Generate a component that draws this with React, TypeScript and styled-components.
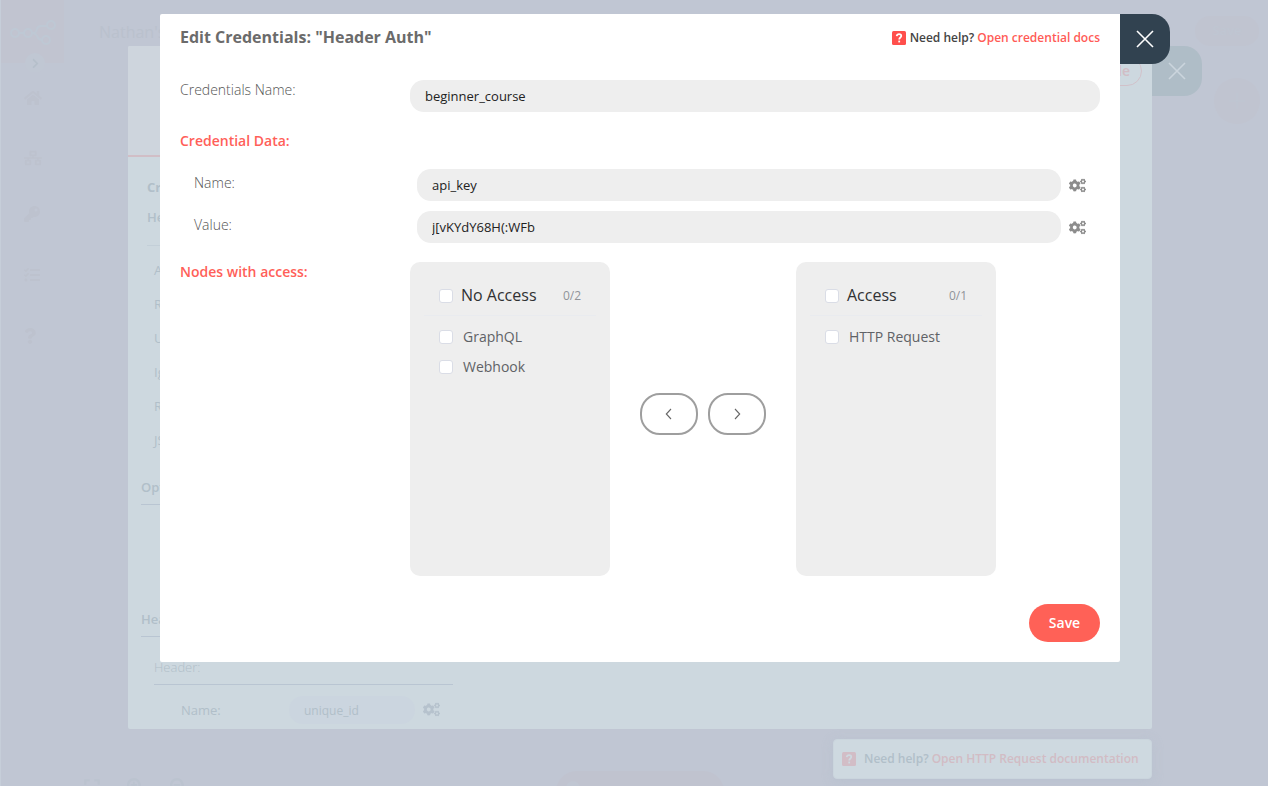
import React from "react";
import styled, { createGlobalStyle } from "styled-components";
import {
  FaCogs,
  FaExpand,
  FaHome,
  FaKey,
  FaChevronRight,
  FaNetworkWired,
  FaQuestion,
  FaSearchMinus,
  FaSearchPlus,
  FaTasks,
} from "react-icons/fa";

const GlobalStyle = createGlobalStyle`
  * { box-sizing: border-box; }
  body { margin: 0; font-family: "Open Sans", "Noto Sans", sans-serif; }
  button { font-family: inherit; padding: 0; margin: 0; cursor: pointer; }
  svg { display: block; flex: none; }
`;

const Screen = styled.div`
  position: relative;
  width: 1268px;
  height: 786px;
  overflow: hidden;
  display: flex;
  background: #c0c6d3;
  border-left: 1px solid #c6ced9;
`;

/* Workflow editor in the background */

const SideBar = styled.nav`
  width: 63px;
  flex: none;
  display: flex;
  flex-direction: column;
  color: #bdc2ce;
`;

const LogoBlock = styled.div`
  height: 63px;
  padding: 20px 0 0 9px;
  background: #c1c4d0;
`;

const Expander = styled.div`
  width: 20px;
  height: 20px;
  margin: -10px 0 0 24px;
  border-radius: 50%;
  background: #c0c7d3;
  color: #b5bfca;
  display: flex;
  align-items: center;
  justify-content: center;
`;

const SideItem = styled.div<{ $gap: number; $left?: number }>`
  margin: ${(p) => p.$gap}px 0 0 ${(p) => p.$left ?? 23}px;
  height: 18px;
  display: flex;
  align-items: center;
`;

const Canvas = styled.main`
  flex: 1;
  display: flex;
  flex-direction: column;
`;

const TopBar = styled.header`
  height: 46px;
  padding: 16px 9px 0 35px;
  display: flex;
  justify-content: space-between;
  align-items: flex-start;
`;

const WorkflowName = styled.div`
  font-size: 16px;
  line-height: 32px;
  color: #bac1cd;
`;

const FaintSave = styled.div`
  width: 64px;
  height: 30px;
  border-radius: 15px;
  background: #c0c4d0;
  color: #bfc6d2;
  font-size: 13px;
  font-weight: 600;
  line-height: 29px;
  text-align: center;
`;

const AddNode = styled.div`
  align-self: flex-end;
  width: 46px;
  height: 46px;
  margin: 32px 8px 0 0;
  border-radius: 50%;
  background: #c0c4d0;
  display: flex;
  align-items: center;
  justify-content: center;
`;

const CanvasFooter = styled.footer`
  margin-top: auto;
  height: 15px;
  padding-left: 19px;
  display: flex;
  overflow: hidden;
  color: #bbc3cf;
`;

const ZoomTools = styled.div`
  display: flex;
  gap: 26px;
  padding-top: 7px;
  width: 473px;
`;

const RunButton = styled.div`
  width: 168px;
  height: 42px;
  padding: 10px 20px;
  border-radius: 21px;
  background: #c0c3cf;
`;

const RunDot = styled.div`
  width: 14px;
  height: 14px;
  margin-left: -10px;
  border-radius: 50%;
  background: #c0c6d2;
`;

/* Node settings window behind the dialog */

const NodeWindow = styled.section`
  position: absolute;
  left: 127px;
  top: 46px;
  display: flex;
  align-items: flex-start;
`;

const NodePanel = styled.div`
  width: 1024px;
  height: 683px;
  border-radius: 2px 0 2px 2px;
  background: #cdd8df;
  display: flex;
  overflow: hidden;
`;

const Parameters = styled.div`
  width: 350px;
  display: flex;
  flex-direction: column;
`;

const ParameterHead = styled.div`
  height: 111px;
  flex: none;
  background: #ced5dd;
  border-bottom: 2px solid #d1bec6;
`;

const ParameterBody = styled.div`
  padding: 13px 25px 0 13px;
  display: flex;
  flex-direction: column;
  font-size: 13px;
  color: #b1bfc9;
`;

const ParamLine = styled.div<{
  $indent?: number;
  $gap?: number;
  $height: number;
  $weight?: number;
  $rule?: string;
}>`
  height: ${(p) => p.$height}px;
  flex: none;
  margin: ${(p) => p.$gap ?? 0}px 0 0 ${(p) => p.$indent ?? 0}px;
  line-height: 34px;
  font-weight: ${(p) => p.$weight ?? 400};
  border-bottom: ${(p) => (p.$rule ? `1px solid ${p.$rule}` : "none")};
`;

const FaintRow = styled.div`
  display: flex;
  align-items: center;
  margin: 11px 0 0 40px;
  height: 28px;
`;

const FaintLabel = styled.div`
  width: 108px;
`;

const FaintInput = styled.div`
  width: 126px;
  height: 28px;
  margin-right: 8px;
  padding-left: 15px;
  line-height: 29px;
  border-radius: 14px;
  background: #cbd5df;
  font-size: 12px;
`;

const FaintGears = styled.div`
  height: 26px;
  align-self: flex-start;
  display: flex;
  align-items: center;
  color: #b6c2cd;
`;

const Output = styled.div`
  flex: 1;
  display: flex;
  justify-content: flex-end;
  padding: 10px 10px 0 0;
`;

const ExecuteNode = styled.div`
  width: 130px;
  height: 30px;
  padding-right: 11px;
  border: 1px solid #d1c1c9;
  border-radius: 15px;
  color: #d1bdc5;
  font-size: 14px;
  font-weight: 600;
  line-height: 28px;
  text-align: right;
`;

const CloseTab = styled.button<{ $faint?: boolean }>`
  width: 50px;
  height: 50px;
  border: 0;
  border-radius: 0 18px 18px 0;
  background: ${(p) => (p.$faint ? "#afbdc7" : "#314250")};
  color: ${(p) => (p.$faint ? "#cbd5dd" : "#ffffff")};
  display: flex;
  align-items: center;
  justify-content: center;
`;

const HelpToast = styled.aside`
  position: absolute;
  left: 832px;
  top: 739px;
  width: 319px;
  height: 40px;
  padding-left: 8px;
  display: flex;
  align-items: center;
  border: 1px solid #cad5dd;
  border-radius: 4px;
  background: #ced9e0;
  box-shadow: 0 2px 12px rgba(170, 184, 200, 0.3);
  color: #b1bfc9;
  font-size: 12px;
  font-weight: 600;
  white-space: nowrap;
`;

const ToastText = styled.span`
  margin: -1px 3px 0 8px;
`;

const ToastLink = styled.span`
  margin-top: -1px;
  color: #d2bcc4;
`;

/* Credentials dialog */

const DialogLayer = styled.div`
  position: absolute;
  left: 159px;
  top: 14px;
  display: flex;
  align-items: flex-start;
`;

const Dialog = styled.section`
  width: 960px;
  height: 648px;
  padding: 0 20px 20px;
  border-radius: 2px 0 2px 2px;
  background: #fff;
  display: flex;
  flex-direction: column;
`;

const DialogHeader = styled.header`
  height: 66px;
  display: flex;
  justify-content: space-between;
  align-items: flex-start;
`;

const Title = styled.h1`
  margin: 0;
  font-size: 16px;
  line-height: 46px;
  font-weight: 700;
  color: #6b6b6b;
`;

const Help = styled.div`
  height: 48px;
  display: flex;
  align-items: center;
  font-size: 12px;
  font-weight: 600;
  color: #444;
`;

const HelpText = styled.span`
  margin: -2px 3px 0 4px;
`;

const HelpLink = styled.a`
  margin-top: -2px;
  color: #ff5b56;
`;

const Field = styled.div<{ $nested?: boolean }>`
  display: flex;
  height: 32px;
  margin: ${(p) => (p.$nested ? "0 14px 10px 14px" : "0")};
`;

const Label = styled.label<{ $width: number }>`
  width: ${(p) => p.$width}px;
  flex: none;
  line-height: ${(p) => (p.$width === 230 ? 20 : 28)}px;
  font-size: 14px;
  font-weight: 300;
  color: #555;
`;

const Input = styled.input`
  flex: 1;
  min-width: 0;
  height: 32px;
  padding: 0 15px 1px;
  border: 0;
  outline: 0;
  border-radius: 14px;
  background: #eee;
  font: 400 13px "Open Sans", sans-serif;
  color: #222;
`;

const Gears = styled.div`
  width: 25px;
  padding-left: 8px;
  display: flex;
  align-items: center;
  color: #8c8c8c;
`;

const SectionTitle = styled.h2<{ $gapTop?: number }>`
  width: 230px;
  margin: ${(p) => p.$gapTop ?? 0}px 0 0;
  font-size: 14px;
  line-height: 20px;
  font-weight: 600;
  color: #ff5f59;
`;

const FieldGroup = styled.div`
  margin-top: 18px;
`;

const Transfer = styled.div`
  display: flex;
  margin-top: 9px;
`;

const TransferPanel = styled.div`
  width: 200px;
  height: 314px;
  padding: 13px 14px 0;
  border-radius: 10px;
  background: #eee;
`;

const PanelHead = styled.div`
  height: 41px;
  padding: 0 15px;
  border-bottom: 1px solid #e9ebef;
  display: flex;
  align-items: center;
  font-size: 16px;
  color: #303133;
`;

const Count = styled.span`
  margin-left: auto;
  font-size: 12px;
  color: #909399;
`;

const PanelList = styled.ul`
  list-style: none;
  margin: 0;
  padding: 6px 15px 0;
`;

const PanelItem = styled.li`
  height: 30px;
  display: flex;
  align-items: center;
  font-size: 14px;
  color: #606266;
`;

const ItemText = styled.span`
  margin-top: -2px;
`;

const CheckBox = styled.span<{ $gap: number; $shift?: number }>`
  width: 14px;
  height: 14px;
  flex: none;
  margin: ${(p) => p.$shift ?? 0}px ${(p) => p.$gap}px 0 0;
  border: 1px solid #dadde6;
  border-radius: 3px;
  background: #fff;
`;

const TransferButtons = styled.div`
  width: 186px;
  padding: 131px 30px 0;
  display: flex;
  gap: 10px;
`;

const MoveButton = styled.button`
  width: 58px;
  height: 42px;
  border: 2px solid #9e9e9e;
  border-radius: 20px;
  background: #fff;
  display: flex;
  align-items: center;
  justify-content: center;
  color: #666;
`;

const DialogFooter = styled.footer`
  margin-top: auto;
  display: flex;
  justify-content: flex-end;
`;

const SaveButton = styled.button`
  width: 71px;
  height: 38px;
  padding-bottom: 2px;
  border: 0;
  border-radius: 19px;
  background: #ff6157;
  color: #fff;
  font-size: 14px;
  font-weight: 600;
`;

const Cross = () => (
  <svg width="18" height="18" viewBox="0 0 18 18" stroke="currentColor" strokeWidth="1.6" fill="none">
    <path d="M1 1L17 17M17 1L1 17" />
  </svg>
);

const Chevron = ({ left }: { left?: boolean }) => (
  <svg width="8" height="12" viewBox="0 0 8 12" stroke="currentColor" strokeWidth="1.1" fill="none">
    <path d={left ? "M6 1L1.3 6L6 11" : "M2 1L6.7 6L2 11"} />
  </svg>
);

const HelpMark = ({ bg, fg }: { bg: string; fg: string }) => (
  <svg width="14" height="14" viewBox="0 0 14 14" fill="none">
    <rect width="14" height="14" rx="1.5" fill={bg} />
    <path d="M4.7 5.2C4.9 3.7 5.8 3.2 7.1 3.2C8.4 3.2 9.3 3.9 9.3 5C9.3 6.6 7.2 6.4 7.2 8.6" stroke={fg} strokeWidth="1.7" />
    <rect x="6.3" y="9.6" width="1.8" height="1.8" fill={fg} />
  </svg>
);

const Logo = () => (
  <svg width="46" height="26" viewBox="0 0 46 26" fill="none" stroke="#bec8d4" strokeWidth="2">
    <circle cx="5" cy="13" r="4" />
    <circle cx="18" cy="13" r="4" />
    <circle cx="41" cy="5" r="4" />
    <circle cx="36" cy="20" r="4" />
    <path d="M9 13H14M22 13C30 13 24 6 31 6H37M22 13C29 13 26 20 32 20" />
  </svg>
);

const Panel = ({ title, count, items }: { title: string; count: string; items: string[] }) => (
  <TransferPanel>
    <PanelHead>
      <CheckBox $gap={8} $shift={1} />
      {title}
      <Count>{count}</Count>
    </PanelHead>
    <PanelList>
      {items.map((item) => (
        <PanelItem key={item}>
          <CheckBox $gap={10} />
          <ItemText>{item}</ItemText>
        </PanelItem>
      ))}
    </PanelList>
  </TransferPanel>
);

const CredentialField = ({ label, value }: { label: string; value: string }) => (
  <Field $nested>
    <Label $width={223}>{label}</Label>
    <Input defaultValue={value} />
    <Gears>
      <FaCogs size={17} />
    </Gears>
  </Field>
);

const Editor = () => (
  <>
    <SideBar>
      <LogoBlock>
        <Logo />
      </LogoBlock>
      <Expander>
        <FaChevronRight size={11} />
      </Expander>
      <SideItem $gap={16}><FaHome size={18} /></SideItem>
      <SideItem $gap={42}><FaNetworkWired size={18} /></SideItem>
      <SideItem $gap={38}><FaKey size={16} /></SideItem>
      <SideItem $gap={43}><FaTasks size={16} /></SideItem>
      <SideItem $gap={43} $left={21}><FaQuestion size={16} /></SideItem>
    </SideBar>
    <Canvas>
      <TopBar>
        <WorkflowName>Nathan's</WorkflowName>
        <FaintSave>Save</FaintSave>
      </TopBar>
      <AddNode>
        <svg width="16" height="16" viewBox="0 0 16 16" stroke="#bec6d2">
          <path d="M8 0V16M0 8H16" />
        </svg>
      </AddNode>
      <CanvasFooter>
        <ZoomTools>
          <FaExpand size={18} />
          <FaSearchPlus size={17} />
          <FaSearchMinus size={17} />
        </ZoomTools>
        <RunButton><RunDot /></RunButton>
      </CanvasFooter>
    </Canvas>
  </>
);

const options = ["Au", "Re", "UR", "Ig", "Re", "JS"];

const NodeSettings = () => (
  <NodeWindow>
    <NodePanel>
      <Parameters>
        <ParameterHead />
        <ParameterBody>
          <ParamLine $indent={6} $height={30} $weight={700}>Cr</ParamLine>
          <ParamLine $indent={6} $height={46} $weight={600} $rule="#c3cfd8">He</ParamLine>
          {options.map((text, i) => (
            <ParamLine key={i} $gap={i === 0 ? 7 : 0} $indent={13} $height={34}>
              {text}
            </ParamLine>
          ))}
          <ParamLine $gap={13} $height={35} $weight={600} $rule="#b9c5d2">Opt</ParamLine>
          <ParamLine $gap={97} $height={35} $weight={600} $rule="#b9c5d2">Hea</ParamLine>
          <ParamLine $gap={13} $indent={13} $height={35} $weight={300} $rule="#b9c5d2">Header:</ParamLine>
          <FaintRow>
            <FaintLabel>Name:</FaintLabel>
            <FaintInput>unique_id</FaintInput>
            <FaintGears>
              <FaCogs size={17} />
            </FaintGears>
          </FaintRow>
        </ParameterBody>
      </Parameters>
      <Output>
        <ExecuteNode>Execute Node</ExecuteNode>
      </Output>
    </NodePanel>
    <CloseTab $faint aria-label="Close node">
      <Cross />
    </CloseTab>
  </NodeWindow>
);

export default function App() {
  return (
    <Screen>
      <GlobalStyle />
      <Editor />
      <NodeSettings />
      <HelpToast>
        <HelpMark bg="#d2bdc6" fg="#ced9e0" />
        <ToastText>Need help?</ToastText>
        <ToastLink>Open HTTP Request documentation</ToastLink>
      </HelpToast>
      <DialogLayer>
        <Dialog>
          <DialogHeader>
            <Title>Edit Credentials: "Header Auth"</Title>
            <Help>
              <HelpMark bg="#ff4f4c" fg="#ffffff" />
              <HelpText>Need help?</HelpText>
              <HelpLink>Open credential docs</HelpLink>
            </Help>
          </DialogHeader>
          <Field>
            <Label $width={230}>Credentials Name:</Label>
            <Input defaultValue="beginner_course" />
          </Field>
          <SectionTitle $gapTop={19}>Credential Data:</SectionTitle>
          <FieldGroup>
            <CredentialField label="Name:" value="api_key" />
            <CredentialField label="Value:" value="j[vKYdY68H(:WFb" />
          </FieldGroup>
          <Transfer>
            <SectionTitle>Nodes with access:</SectionTitle>
            <Panel title="No Access" count="0/2" items={["GraphQL", "Webhook"]} />
            <TransferButtons>
              <MoveButton aria-label="Remove access"><Chevron left /></MoveButton>
              <MoveButton aria-label="Give access"><Chevron /></MoveButton>
            </TransferButtons>
            <Panel title="Access" count="0/1" items={["HTTP Request"]} />
          </Transfer>
          <DialogFooter>
            <SaveButton>Save</SaveButton>
          </DialogFooter>
        </Dialog>
        <CloseTab aria-label="Close dialog">
          <Cross />
        </CloseTab>
      </DialogLayer>
    </Screen>
  );
}
